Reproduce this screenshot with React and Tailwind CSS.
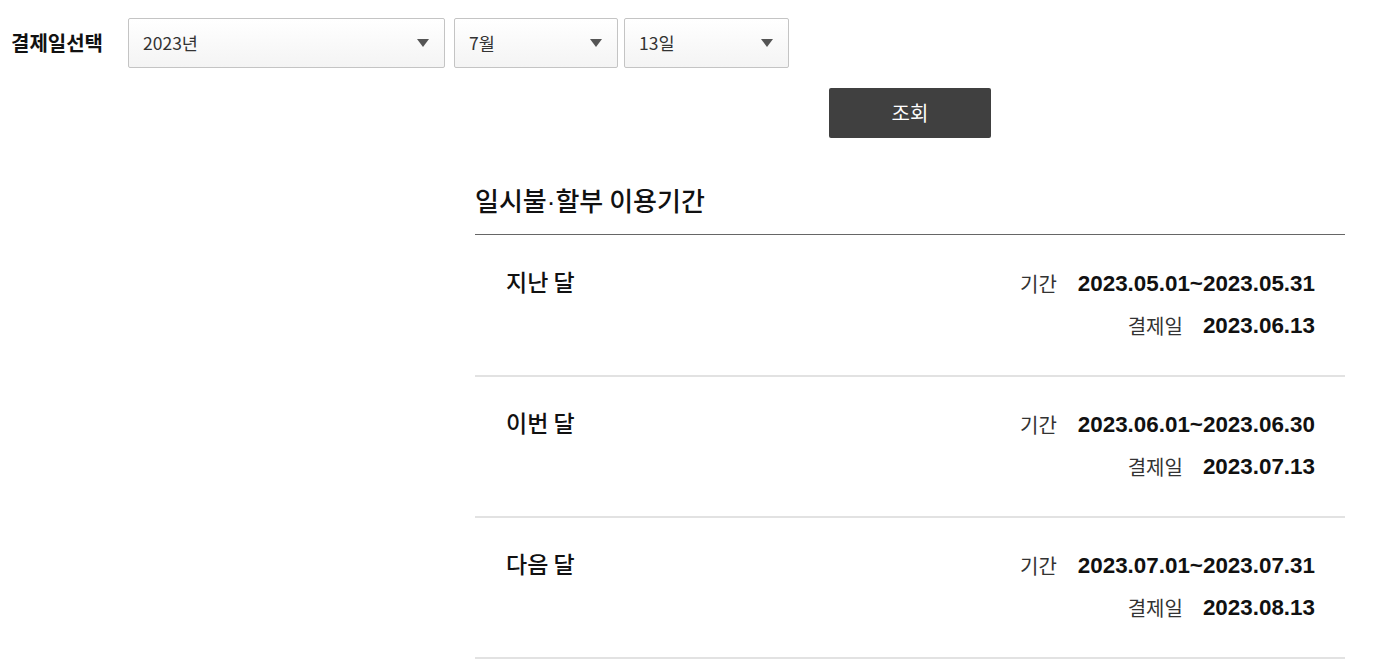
const kr = "font-['Noto_Sans_CJK_KR',sans-serif]";
const mix = "font-['Liberation_Sans','Noto_Sans_CJK_KR',sans-serif]";

const periods = [
  { name: "지난 달", range: "2023.05.01~2023.05.31", pay: "2023.06.13" },
  { name: "이번 달", range: "2023.06.01~2023.06.30", pay: "2023.07.13" },
  { name: "다음 달", range: "2023.07.01~2023.07.31", pay: "2023.08.13" },
];

function Select({ value, width }) {
  return (
    <div
      className={`${width} h-[50px] flex items-center justify-between pl-[14px] pr-[14px] border border-[#c4c4c4] rounded-[2px] bg-gradient-to-b from-white to-[#f4f4f4] text-[17.5px] text-[#333] ${kr}`}
    >
      <span>{value}</span>
      <svg width="12" height="8" viewBox="0 0 12 8" className="mr-[1px]">
        <path d="M0 0H12L6 8Z" fill="#555" />
      </svg>
    </div>
  );
}

export default function App() {
  return (
    <div className={`w-[1388px] h-[659px] bg-white overflow-hidden ${kr}`}>
      {/* 결제일 선택 */}
      <div className="flex items-center pt-[18px] pl-[11px]">
        <span className="w-[117px] text-[20px] font-bold text-[#111]">결제일선택</span>
        <div className="flex gap-[9px]">
          <Select value="2023년" width="w-[317px]" />
          <div className="flex gap-[6px]">
            <Select value="7월" width="w-[164px]" />
            <Select value="13일" width="w-[165px]" />
          </div>
        </div>
      </div>

      <div className="flex pl-[829px] pt-[20px]">
        <button className="w-[162px] h-[50px] bg-[#404040] rounded-[2px] text-white text-[20px]">
          조회
        </button>
      </div>

      {/* 이용기간 */}
      <div className="ml-[475px] w-[870px] mt-[44px]">
        <h2 className="h-[53px] text-[26px] font-medium text-[#111] leading-[34px] pt-[1px] border-b border-[#666]">
          일시불<span className="font-['Liberation_Sans',sans-serif]">·</span>할부 이용기간
        </h2>
        <div className="pt-[1px]">
          {periods.map((p) => (
            <div
              key={p.name}
              className="flex justify-between pl-[31px] pr-[30px] pt-[31px] h-[141px] border-b-2 border-[#e2e2e2]"
            >
              <span className="text-[23px] font-medium text-[#111] leading-[28px]">{p.name}</span>
              <div className="flex flex-col items-end gap-[10px] mt-[1px]">
                <div className="flex items-center gap-[21px] h-[32px]">
                  <span className="text-[20px] text-[#333]">기간</span>
                  <span className={`text-[22.4px] font-bold text-[#111] ${mix}`}>{p.range}</span>
                </div>
                <div className="flex items-center gap-[20px] h-[32px]">
                  <span className="text-[20px] text-[#333]">결제일</span>
                  <span className={`text-[22.4px] font-bold text-[#111] ${mix}`}>{p.pay}</span>
                </div>
              </div>
            </div>
          ))}
        </div>
      </div>
    </div>
  );
}
